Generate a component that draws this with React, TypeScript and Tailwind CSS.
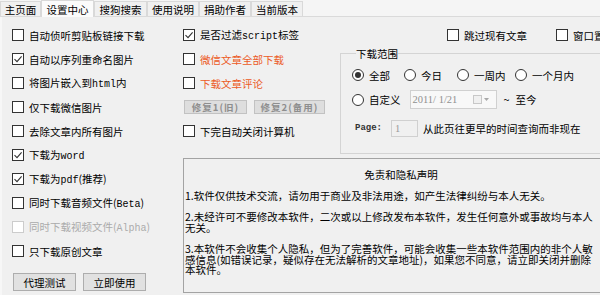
import React from "react";

function Box({ checked, disabled }: { checked?: boolean; disabled?: boolean }) {
  return (
    <span
      className={`w-[12px] h-[12px] border bg-white flex items-center justify-center shrink-0 ${
        disabled ? "border-[#cccccc]" : "border-[#333333]"
      }`}
    >
      {checked && (
        <svg width="10" height="10" viewBox="0 0 10 10">
          <path d="M1.5 5.2 L4 7.7 L8.6 2.3" stroke="#333333" strokeWidth="1.1" fill="none" />
        </svg>
      )}
    </span>
  );
}

function Check({
  children,
  checked,
  disabled,
  color,
}: {
  children: React.ReactNode;
  checked?: boolean;
  disabled?: boolean;
  color?: string;
}) {
  return (
    <div className="h-[24px] flex items-center gap-[5px]">
      <Box checked={checked} disabled={disabled} />
      <span className={`whitespace-nowrap ${color ?? (disabled ? "text-[#ababab]" : "text-black")}`}>{children}</span>
    </div>
  );
}

function Radio({ children, checked }: { children: React.ReactNode; checked?: boolean }) {
  return (
    <div className="flex items-center gap-[5px]">
      <span className="w-[12px] h-[12px] rounded-full border border-[#333333] bg-white flex items-center justify-center shrink-0">
        {checked && <span className="w-[6px] h-[6px] rounded-full bg-[#333333]" />}
      </span>
      <span className="whitespace-nowrap">{children}</span>
    </div>
  );
}

const M = ({ children }: { children: React.ReactNode }) => (
  <span className="font-['Liberation_Mono',monospace] text-[10px]">{children}</span>
);

export default function App() {
  const tabs = [
    { t: "主页面", w: "w-[41px]" },
    { t: "设置中心", w: "w-[53px]", sel: true },
    { t: "搜狗搜索", w: "w-[53px]" },
    { t: "使用说明", w: "w-[52px]" },
    { t: "捐助作者", w: "w-[52px]" },
    { t: "当前版本", w: "w-[52px]" },
  ];
  return (
    <div className="w-[600px] h-[295px] overflow-hidden bg-[#f5f5f5] text-[10.5px] leading-[11px] text-black font-['Noto_Sans_CJK_SC','Noto_Sans',sans-serif]">
      {/* tabs */}
      <div className="h-[17px] flex items-end border-b border-[#dadada]">
        {tabs.map((tab) => (
          <div
            key={tab.t}
            className={`${tab.w} flex items-center justify-center border border-b-0 border-[#d9d9d9] whitespace-nowrap ${
              tab.sel ? "h-[17px] bg-[#fbfbfb] -mb-px" : "h-[15px] bg-[#f0f0f0]"
            }`}
          >
            {tab.t}
          </div>
        ))}
      </div>

      {/* panel */}
      <div className="h-[278px] flex bg-[#f0f0f0] border-l-2 border-[#f7f7f7]">
        {/* left column */}
        <div className="w-[181px] shrink-0 pl-[10px] pt-[6px] flex flex-col">
          <Check>自动侦听剪贴板链接下载</Check>
          <Check checked>自动以序列重命名图片</Check>
          <Check>
            将图片嵌入到<M>html</M>内
          </Check>
          <Check>仅下载微信图片</Check>
          <Check>去除文章内所有图片</Check>
          <Check checked>
            下载为<M>word</M>
          </Check>
          <Check checked>
            下载为<M>pdf</M>(推荐)
          </Check>
          <Check>
            同时下载音频文件(<M>Beta</M>)
          </Check>
          <Check disabled>
            同时下载视频文件(<M>Alpha</M>)
          </Check>
          <Check>只下载原创文章</Check>
          <div className="flex gap-[7px] mt-[10px] pl-[1px]">
            <button className="w-[63px] h-[18px] bg-[#e1e1e1] border border-[#adadad] flex items-center justify-center">
              代理测试
            </button>
            <button className="w-[63px] h-[18px] bg-[#e1e1e1] border border-[#adadad] flex items-center justify-center">
              立即使用
            </button>
          </div>
        </div>

        {/* right area */}
        <div className="flex-1 flex flex-col min-w-0">
          <div className="h-[141px] flex shrink-0">
            {/* middle column */}
            <div className="w-[157px] shrink-0 pt-[6px] flex flex-col">
              <Check checked>
                是否过滤<M>script</M>标签
              </Check>
              <Check color="text-[#ec5a25]">微信文章全部下载</Check>
              <Check color="text-[#ec5a25]">下载文章评论</Check>
              <div className="h-[24px] flex items-center gap-[7px] pl-[1px]">
                <button className="w-[63px] h-[14px] bg-[#dedede] border border-[#c2c2c2] flex items-center justify-center text-[9.5px] font-bold tracking-[1px] text-[#8e8e8e] whitespace-nowrap">
                  修复1(旧)
                </button>
                <button className="w-[71px] h-[14px] bg-[#dedede] border border-[#c2c2c2] flex items-center justify-center text-[9.5px] font-bold tracking-[1px] text-[#8e8e8e] whitespace-nowrap">
                  修复2(备用)
                </button>
              </div>
              <Check>下完自动关闭计算机</Check>
            </div>

            {/* options & group box */}
            <div className="flex-1 pt-[6px] flex flex-col min-w-0">
              <div className="flex pl-[107px] gap-[29px]">
                <Check>跳过现有文章</Check>
                <Check>窗口置顶</Check>
              </div>
              <fieldset className="mt-[1px] border border-[#d4d4d4] border-r-0 w-[300px] h-[106px] pl-[11px] pt-[10px]">
                <legend className="ml-[4px] leading-[11px]">下载范围</legend>
                <div className="flex h-[12px] items-center">
                  <div className="w-[52px]">
                    <Radio checked>全部</Radio>
                  </div>
                  <div className="w-[53px]">
                    <Radio>今日</Radio>
                  </div>
                  <div className="w-[58px]">
                    <Radio>一周内</Radio>
                  </div>
                  <Radio>一个月内</Radio>
                </div>
                <div className="flex items-center mt-[9px] h-[19px]">
                  <Radio>自定义</Radio>
                  <div className="ml-[9px] w-[87px] h-[19px] border border-[#d0d0d0] bg-[#f8f8f8] flex items-center pl-[2px] pr-[6px]">
                    <span className="font-['Liberation_Serif',serif] text-[10.5px] text-[#909090] whitespace-pre flex-1">
                      2011/ 1/21
                    </span>
                    <svg width="17" height="9" viewBox="0 0 17 9">
                      <rect x="0.5" y="0.5" width="8" height="8" fill="#f0f0f0" stroke="#c8c8c8" />
                      <path d="M11 3 L16 3 L13.5 6 Z" fill="#a8a8a8" />
                    </svg>
                  </div>
                  <span className="ml-[7px] text-[11px]">~</span>
                  <span className="ml-[6px]">至今</span>
                </div>
                <div className="flex items-center mt-[11px] h-[17px]">
                  <span className="ml-[3px] w-[36px] font-['Liberation_Mono',monospace] text-[9px] font-bold text-[#333333]">
                    Page:
                  </span>
                  <div className="w-[27px] h-[17px] border border-[#d0d0d0] bg-[#f0f0f0] flex items-center pl-[3px] font-['Liberation_Serif',serif] text-[10.5px] text-[#999999]">
                    1
                  </div>
                  <span className="ml-[5px] whitespace-nowrap">从此页往更早的时间查询而非现在</span>
                </div>
              </fieldset>
            </div>
          </div>

          {/* disclaimer box */}
          <div className="w-[434px] h-[135px] border border-[#a3a3a3] border-r-0 bg-[#f0f0f0] pt-[11px] pl-[1px] leading-[10.6px] whitespace-nowrap">
            <div className="text-center">免责和隐私声明</div>
            <div className="mt-[10.6px]">1.软件仅供技术交流，请勿用于商业及非法用途，如产生法律纠纷与本人无关。</div>
            <div className="mt-[10.6px]">2.未经许可不要修改本软件，二次或以上修改发布本软件，发生任何意外或事故均与本人</div>
            <div>无关。</div>
            <div className="mt-[10.6px]">3.本软件不会收集个人隐私，但为了完善软件，可能会收集一些本软件范围内的非个人敏</div>
            <div>感信息(如错误记录，疑似存在无法解析的文章地址)，如果您不同意，请立即关闭并删除</div>
            <div>本软件。</div>
          </div>
        </div>
      </div>
    </div>
  );
}
